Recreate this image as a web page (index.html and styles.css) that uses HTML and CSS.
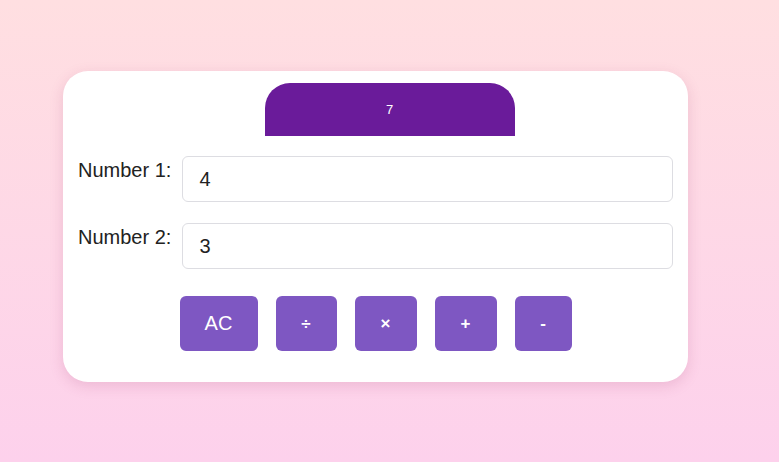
FILE: index.html
```html
<!DOCTYPE html>
<html>
<head>
<meta charset="utf-8">
<link rel="stylesheet" href="styles.css">
</head>
<body>
<div class="card">
  <div class="display">7</div>
  <div class="row">
    <label class="label">Number 1:</label>
    <input class="field" type="text" value="4">
  </div>
  <div class="row">
    <label class="label">Number 2:</label>
    <input class="field" type="text" value="3">
  </div>
  <div class="buttons">
    <button class="btn btn-ac">AC</button>
    <button class="btn btn-div">÷</button>
    <button class="btn btn-mul">×</button>
    <button class="btn btn-add">+</button>
    <button class="btn btn-sub">-</button>
  </div>
</div>
</body>
</html>
```
FILE: styles.css
```css
html, body {
  margin: 0;
  height: 100%;
}
body {
  background: linear-gradient(to bottom, #ffdfe1, #fdd1ec);
  font-family: "Liberation Sans", Arial, sans-serif;
  padding-top: 71px;
  padding-left: 63px;
  box-sizing: border-box;
}
.card {
  width: 625px;
  box-sizing: border-box;
  background: #fff;
  border-radius: 25px;
  box-shadow: 0 4px 14px rgba(160, 60, 110, 0.18);
  padding: 12px 15px 31px;
  display: flex;
  flex-direction: column;
}
.display {
  align-self: center;
  margin-left: 28px;
  width: 250px;
  height: 53px;
  background: #6a1b9a;
  color: #fff;
  border-radius: 25px 25px 0 0;
  display: flex;
  align-items: center;
  justify-content: center;
  font-size: 13px;
  margin-bottom: 20px;
}
.row {
  display: flex;
  align-items: flex-start;
  gap: 11px;
  margin-bottom: 21px;
}
.row + .row {
  margin-bottom: 27px;
}
.label {
  font-size: 20px;
  color: #222;
  padding-top: 3px;
  white-space: nowrap;
}
.field {
  flex: 1;
  height: 46px;
  box-sizing: border-box;
  border: 1px solid #dddde2;
  border-radius: 6px;
  padding: 0 16px;
  font-size: 20px;
  font-family: "Liberation Sans", Arial, sans-serif;
  color: #222;
  outline: none;
}
.buttons {
  display: flex;
  justify-content: center;
  gap: 18px;
}
.btn {
  height: 55px;
  border: none;
  border-radius: 6px;
  background: #7e57c2;
  color: #fff;
  font-family: "Liberation Sans", Arial, sans-serif;
  font-size: 17px;
  font-weight: bold;
  padding: 0 25px;
}
.btn-ac {
  font-size: 20px;
  font-weight: normal;
  width: 78px;
}
.btn-div { width: 61px; }
.btn-mul { width: 62px; }
.btn-add { width: 62px; }
.btn-sub { width: 57px; }
```
